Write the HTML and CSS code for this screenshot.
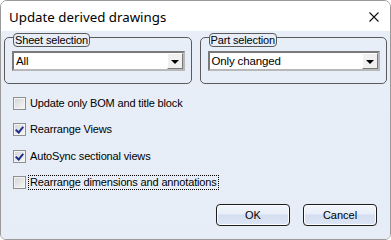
FILE: index.html
```html
<!DOCTYPE html>
<html lang="en">
<head>
    <meta charset="UTF-8">
    <title>Update derived drawings</title>
    <link rel="stylesheet" href="styles.css">
</head>
<body>
    <div class="window">
        <header class="titlebar">
            <span class="title">Update derived drawings</span>
            <svg class="close" width="12" height="12" viewBox="0 0 12 12">
                <path d="M1.5 1.5 L10.5 10.5 M10.5 1.5 L1.5 10.5" stroke="#111" stroke-width="1.1" fill="none"/>
            </svg>
        </header>

        <main class="content">
            <div class="groups">
                <section class="group">
                    <span class="group-label">Sheet selection</span>
                    <div class="combo">
                        <span class="combo-value">All</span>
                        <span class="combo-arrow"></span>
                    </div>
                </section>
                <section class="group">
                    <span class="group-label">Part selection</span>
                    <div class="combo">
                        <span class="combo-value">Only changed</span>
                        <span class="combo-arrow"></span>
                    </div>
                </section>
            </div>

            <ul class="options">
                <li class="option">
                    <span class="check"></span>
                    <span class="label">Update only BOM and title block</span>
                </li>
                <li class="option">
                    <span class="check checked"></span>
                    <span class="label">Rearrange Views</span>
                </li>
                <li class="option">
                    <span class="check checked"></span>
                    <span class="label">AutoSync sectional views</span>
                </li>
                <li class="option">
                    <span class="check"></span>
                    <span class="label focused">Rearrange dimensions and annotations</span>
                </li>
            </ul>

            <div class="actions">
                <button>OK</button>
                <button>Cancel</button>
            </div>
        </main>
    </div>
</body>
</html>
```

FILE: styles.css
```css
* {
    box-sizing: border-box;
}

body {
    margin: 0;
    font-family: "Liberation Sans", Arial, sans-serif;
    font-size: 11px;
    letter-spacing: -0.15px;
    color: #000;
    background: #fff;
}

.window {
    width: 391px;
    height: 240px;
    display: flex;
    flex-direction: column;
    border: 1px solid #9a9a9a;
    border-radius: 7px 7px 6px 6px;
    overflow: hidden;
}

.titlebar {
    height: 30px;
    flex-shrink: 0;
    display: flex;
    align-items: center;
    justify-content: space-between;
    padding: 0 10px 0 8px;
    background: #fff;

    .title {
        font-family: "Noto Sans", sans-serif;
        font-size: 13.3px;
        letter-spacing: 0;
        margin-top: 1px;
    }

    .close {
        margin-top: 1px;
    }
}

.content {
    flex-grow: 1;
    display: flex;
    flex-direction: column;
    padding: 6px 3px 0 3px;
    background: linear-gradient(#e8eef8, #e6edf7);
}

.groups {
    display: grid;
    grid-template-columns: 1fr 1fr;
    gap: 8px;
}

.group {
    border: 1px solid #5b5b5b;
    border-radius: 5px;
    padding: 0 6px 12px 7px;
    display: flex;
    flex-direction: column;
    align-items: flex-start;
}

.group-label {
    margin: -5px 0 0 1px;
    height: 14px;
    line-height: 12px;
    padding: 0 1px 0 1px;
    border: 1px solid #5b5b5b;
    border-radius: 4px;
    background: #e8eef8;
}

.combo {
    align-self: stretch;
    margin-top: 4px;
    height: 20px;
    display: flex;
    align-items: center;
    justify-content: space-between;
    background: #fff;
    border: 2px solid;
    border-color: #7a7a7a #b8b8b8 #b8b8b8 #7a7a7a;
    padding: 0 0 0 2px;

    .combo-value {
        font-size: 11.5px;
    }

    .combo-arrow {
        width: 16px;
        height: 16px;
        background: #f0f0f0;
        border: 1px solid;
        border-color: #fff #7a7a7a #7a7a7a #fff;
        display: flex;
        align-items: center;
        justify-content: center;

        &::after {
            content: "";
            border-left: 4px solid transparent;
            border-right: 4px solid transparent;
            border-top: 4px solid #000;
            margin-top: 1px;
        }
    }
}

.options {
    list-style: none;
    margin: 13px 0 0 0;
    padding: 0 0 0 9px;
    display: flex;
    flex-direction: column;
    gap: 13.3px;
}

.option {
    display: flex;
    align-items: center;
    gap: 4px;
    height: 13px;
}

.check {
    width: 13px;
    height: 13px;
    border: 1px solid #8e8f8f;
    background: linear-gradient(135deg, #d4d4d4, #f7f7f7);
    box-shadow: inset 0 0 0 1px #f4f4f4;
    position: relative;

    &.checked::after {
        content: "";
        position: absolute;
        left: 3px;
        top: 1px;
        width: 3px;
        height: 6px;
        border-right: 2px solid #1c2d8c;
        border-bottom: 2px solid #1c2d8c;
        transform: rotate(40deg);
    }
}

.label {
    line-height: 13px;

    &.focused {
        outline: 1px dotted #000;
        padding: 0 1px;
        margin-left: -1px;
    }
}

.actions {
    margin-top: auto;
    margin-bottom: 13px;
    padding-right: 10px;
    display: flex;
    justify-content: flex-end;
    gap: 13px;

    button {
        width: 74px;
        height: 22px;
        font-family: "Liberation Sans", Arial, sans-serif;
        font-size: 11px;
        color: #000;
        border: 1px solid #1d1d1d;
        border-radius: 4px;
        background: linear-gradient(#f2f5fb, #e8eef8 45%, #d3def0 50%, #dde6f4);
        box-shadow: inset 0 0 0 1px #fbfcfe;
        padding: 0;
    }
}
```
